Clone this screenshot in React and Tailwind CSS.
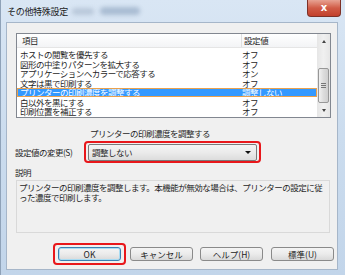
import React from "react";

const font = { fontFamily: '"Noto Sans CJK JP", "Noto Sans", sans-serif' };

const rows = [
  ["ホストの閲覧を優先する", "オフ"],
  ["図形の中塗りパターンを拡大する", "オフ"],
  ["アプリケーションへカラーで応答する", "オン"],
  ["文字は黒で印刷する", "オフ"],
  ["プリンターの印刷濃度を調整する", "調整しない", true],
  ["白以外を黒にする", "オフ"],
  ["印刷位置を補正する", "オフ"],
];

function Btn({ children, def }) {
  return (
    <div
      className={
        "w-[63px] h-[14px] rounded-[3px] border flex items-center justify-center text-[8.5px] leading-none text-[#222] bg-gradient-to-b from-[#f4f4f4] via-[#ebebeb] to-[#d9d9d9] " +
        (def ? "border-[#3c7fb1] shadow-[inset_0_0_0_1px_#a9dcf3]" : "border-[#8a8a8a]")
      }
    >
      {children}
    </div>
  );
}

export default function App() {
  return (
    <div
      className="w-[345px] h-[275px] relative overflow-hidden bg-gradient-to-b from-[#d9e6f4] via-[#cbdcee] to-[#c2d5ea] border-l border-[#8fa2b8]"
      style={font}
    >
      {/* title bar */}
      <div className="h-[22px] flex items-center relative">
        <span className="ml-[6px] text-[9px] tracking-[-0.3px] text-[#1a1a1a] leading-none">その他特殊設定</span>
        <div className="ml-[4px] w-[22px] h-[7px] bg-[#b9c8da] blur-[2px] rounded"></div>
        <div className="ml-[6px] w-[40px] h-[8px] bg-[#a9bcd2] blur-[2px] rounded"></div>
        <div className="absolute right-[4px] top-0 w-[34px] h-[17px] rounded-b-[4px] border border-t-0 border-[#7d3127] bg-gradient-to-b from-[#e7a292] via-[#d05b46] to-[#c2402c] flex items-center justify-center">
          <span className="text-white text-[10px] font-bold leading-none" style={{ fontFamily: '"DejaVu Sans", sans-serif' }}>x</span>
        </div>
      </div>

      {/* client panel */}
      <div className="ml-[5px] w-[332px] h-[248px] bg-[#f0f0f0] border border-[#a6b6c9] flex flex-col text-[8.5px] text-[#1e1e1e]">
        {/* list box */}
        <div className="mt-[10px] ml-[9px] w-[315px] h-[85px] border border-[#828790] bg-white flex">
          <div className="flex-1 flex flex-col">
            <div className="h-[14px] flex bg-gradient-to-b from-white to-[#f3f4f6] border-b border-[#e5e5e5]">
              <div className="w-[225px] pl-[5px] flex items-center border-r border-[#e0e0e0] leading-none tracking-[-0.4px]">項目</div>
              <div className="pl-[2px] flex items-center leading-none tracking-[-0.4px]">設定値</div>
            </div>
            <div className="pt-[1.5px] flex flex-col">
              {rows.map(([a, b, sel], i) => (
                <div
                  key={i}
                  className={
                    "h-[9.5px] flex items-center leading-none tracking-[-0.5px] " +
                    (sel ? "bg-[#3399ff] text-white outline outline-1 outline-[#eaa14d] -outline-offset-1" : "")
                  }
                >
                  <div className="w-[225px] pl-[3px] whitespace-nowrap">{a}</div>
                  <div className="whitespace-nowrap">{b}</div>
                </div>
              ))}
            </div>
          </div>
          {/* scrollbar */}
          <div className="w-[13px] bg-gradient-to-r from-[#e6e6e6] via-[#f0f0f0] to-[#e6e6e6] flex flex-col items-center">
            <div className="h-[14px] flex items-center justify-center">
              <div className="w-0 h-0 border-l-[2.5px] border-r-[2.5px] border-b-[3px] border-l-transparent border-r-transparent border-b-[#444]"></div>
            </div>
            <div className="mt-[20px] w-[11px] h-[35px] rounded-[2px] border border-[#979797] bg-gradient-to-r from-[#f1f1f1] via-[#dcdcdc] to-[#cfcfcf] flex flex-col items-center justify-center gap-[1px]">
              <div className="w-[5px] h-[1px] bg-[#777]"></div>
              <div className="w-[5px] h-[1px] bg-[#777]"></div>
              <div className="w-[5px] h-[1px] bg-[#777]"></div>
            </div>
            <div className="flex-1 flex items-center justify-center">
              <div className="w-0 h-0 border-l-[2.5px] border-r-[2.5px] border-t-[3px] border-l-transparent border-r-transparent border-t-[#444]"></div>
            </div>
          </div>
        </div>

        {/* label */}
        <div className="mt-[9px] ml-[83px] h-[12px] flex items-center leading-none tracking-[-0.5px] whitespace-nowrap">
          プリンターの印刷濃度を調整する
        </div>

        {/* setting row */}
        <div className="mt-[2px] flex items-center">
          <div className="ml-[8px] w-[69px] leading-none tracking-[-0.5px] whitespace-nowrap">設定値の変更(S)</div>
          <div className="w-[177px] h-[22px] border-2 border-[#e8171b] rounded-[4px] px-[2px] py-[0px] flex items-center">
            <div className="w-full h-[17px] rounded-[2px] border border-[#7a7a7a] bg-gradient-to-b from-[#f3f3f3] via-[#ebebeb] to-[#dcdcdc] flex items-center pl-[3px] pr-[5px]">
              <span className="flex-1 leading-none tracking-[-0.5px]">調整しない</span>
              <div className="w-0 h-0 border-l-[3px] border-r-[3px] border-t-[3.5px] border-l-transparent border-r-transparent border-t-[#111]"></div>
            </div>
          </div>
        </div>

        {/* 説明 */}
        <div className="mt-[3px] ml-[8px] h-[12px] flex items-center leading-none tracking-[-0.4px]">説明</div>
        <div className="mt-[2px] ml-[9px] w-[314px] h-[53px] border border-[#d9d9d9] bg-[#f0f0f0] pl-[2px] pt-[2px] leading-[9.5px] tracking-[-0.5px] whitespace-nowrap">
          プリンターの印刷濃度を調整します。本機能が無効な場合は、プリンターの設定に従
          <br />
          った濃度で印刷します。
        </div>

        {/* buttons */}
        <div className="mt-[10px] flex items-center">
          <div className="ml-[46px] border-2 border-[#e8171b] rounded-[4px] px-[3px] py-[2px]">
            <Btn def>OK</Btn>
          </div>
          <div className="ml-[4px]"><Btn>キャンセル</Btn></div>
          <div className="ml-[7px]"><Btn>ヘルプ(H)</Btn></div>
          <div className="ml-[8px]"><Btn>標準(U)</Btn></div>
        </div>
      </div>
    </div>
  );
}
